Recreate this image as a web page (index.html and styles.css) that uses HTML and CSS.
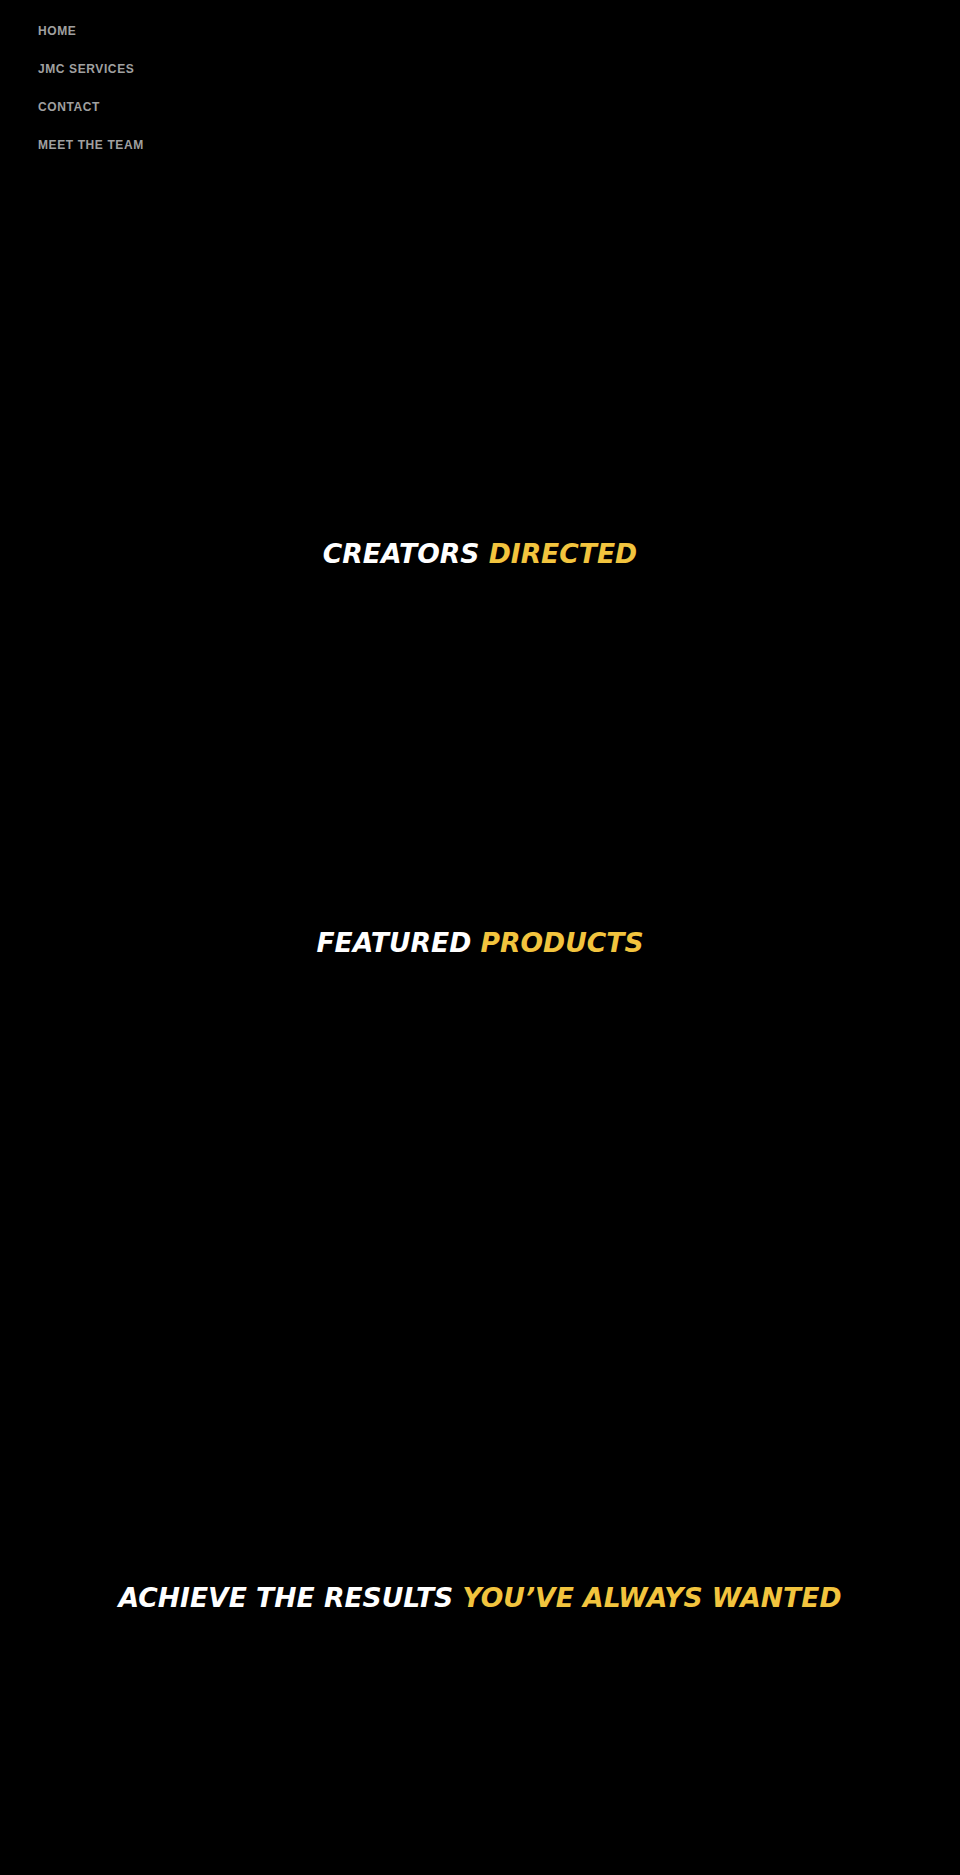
FILE: index.html
```html
<!DOCTYPE html>
<html lang="en">
<head>
    <meta charset="UTF-8">
    <meta name="viewport" content="width=device-width, initial-scale=1.0">
    <title>JMC</title>
    <link rel="stylesheet" href="styles.css">
</head>
<body>
    <nav class="side-nav">
        <a href="#">HOME</a>
        <a href="#">JMC SERVICES</a>
        <a href="#">CONTACT</a>
        <a href="#">MEET THE TEAM</a>
    </nav>

    <section class="hero">
        <h2 class="title">CREATORS <span class="gold">DIRECTED</span></h2>
    </section>

    <section class="products">
        <h2 class="title">FEATURED <span class="gold">PRODUCTS</span></h2>
    </section>

    <section class="results">
        <h2 class="title">ACHIEVE THE RESULTS <span class="gold">YOU’VE ALWAYS WANTED</span></h2>
    </section>
</body>
</html>
```

FILE: styles.css
```css
body {
    margin: 0;
    background-color: #000000;
    color: #ffffff;
    font-family: "DejaVu Sans", sans-serif;
    height: 1875px;
}

.side-nav {
    display: flex;
    flex-direction: column;
    gap: 24px;
    padding: 24px 0 0 38px;
}

.side-nav a {
    font-family: "Liberation Sans", Arial, sans-serif;
    font-size: 12px;
    font-weight: bold;
    line-height: 14px;
    letter-spacing: 0.6px;
    color: #a0a0a0;
    text-decoration: none;
}

.title {
    margin: 0;
    text-align: center;
    font-size: 26.6px;
    font-weight: bold;
    font-style: italic;
    line-height: 30px;
}

.gold {
    color: #f2c43e;
}

.hero {
    padding-top: 387px;
}

.products {
    padding-top: 359px;
}

.results {
    padding-top: 625px;
}
```
